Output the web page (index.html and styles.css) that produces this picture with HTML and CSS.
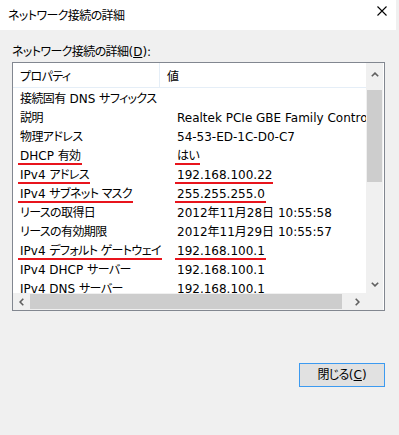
FILE: index.html
```html
<!DOCTYPE html>
<html lang="ja">
<head>
<meta charset="utf-8">
<title>ネットワーク接続の詳細</title>
<link rel="stylesheet" href="styles.css">
</head>
<body>
<div class="window">
  <div class="titlebar">
    <span class="title j">ネットワーク接続の詳細</span>
    <svg class="close" width="10" height="10" viewBox="0 0 10 10"><path d="M0.5 0.5 L9.5 9.5 M9.5 0.5 L0.5 9.5" stroke="#000" stroke-width="1.1" fill="none"/></svg>
  </div>
  <div class="content">
    <div class="label"><span class="j">ネットワーク接続の詳細</span>(<u>D</u>):</div>
    <div class="listbox">
      <div class="view">
        <div class="header">
          <div class="hcell first j">プロパティ</div>
          <div class="hcell second">値</div>
        </div>
        <div class="rows">
          <div class="row"><span class="prop"><span class="j">接続固有</span> DNS <span class="j">サフィックス</span></span><span class="val"></span></div>
          <div class="row"><span class="prop j">説明</span><span class="val">Realtek PCIe GBE Family Controller</span></div>
          <div class="row"><span class="prop j">物理アドレス</span><span class="val">54-53-ED-1C-D0-C7</span></div>
          <div class="row"><span class="prop"><span class="mark">DHCP <span class="j">有効</span></span></span><span class="val"><span class="mark j">はい</span></span></div>
          <div class="row"><span class="prop"><span class="mark">IPv4 <span class="j">アドレス</span></span></span><span class="val"><span class="mark">192.168.100.22</span></span></div>
          <div class="row"><span class="prop"><span class="mark">IPv4 <span class="j">サブネット マスク</span></span></span><span class="val"><span class="mark">255.255.255.0</span></span></div>
          <div class="row"><span class="prop j">リースの取得日</span><span class="val">2012年11月28日 10:55:58</span></div>
          <div class="row"><span class="prop j">リースの有効期限</span><span class="val">2012年11月29日 10:55:57</span></div>
          <div class="row"><span class="prop"><span class="mark">IPv4 <span class="j">デフォルト ゲートウェイ</span></span></span><span class="val"><span class="mark">192.168.100.1</span></span></div>
          <div class="row"><span class="prop">IPv4 DHCP <span class="j">サーバー</span></span><span class="val">192.168.100.1</span></div>
          <div class="row"><span class="prop">IPv4 DNS <span class="j">サーバー</span></span><span class="val">192.168.100.1</span></div>
        </div>
      </div>
      <div class="vscroll">
        <div class="arrow up"><svg width="8" height="5" viewBox="0 0 8 5"><path d="M0.8 4.3 L4 1.1 L7.2 4.3" stroke="#606060" stroke-width="1.6" fill="none"/></svg></div>
        <div class="vtrack"><div class="vthumb"></div></div>
        <div class="arrow"><svg width="8" height="5" viewBox="0 0 8 5"><path d="M0.8 0.7 L4 3.9 L7.2 0.7" stroke="#606060" stroke-width="1.6" fill="none"/></svg></div>
      </div>
      <div class="hscroll">
        <div class="arrow"><svg width="5" height="8" viewBox="0 0 5 8"><path d="M4.3 0.8 L1.1 4 L4.3 7.2" stroke="#606060" stroke-width="1.6" fill="none"/></svg></div>
        <div class="htrack"><div class="hthumb"></div></div>
        <div class="arrow"><svg width="5" height="8" viewBox="0 0 5 8"><path d="M0.7 0.8 L3.9 4 L0.7 7.2" stroke="#606060" stroke-width="1.6" fill="none"/></svg></div>
      </div>
      <div class="corner"></div>
    </div>
    <div class="buttons">
      <button class="btn"><span class="j">閉じる</span>(<u>C</u>)</button>
    </div>
  </div>
</div>
</body>
</html>
```
FILE: styles.css
```css
html, body {
  margin: 0;
  padding: 0;
}
body {
  background: #f0f0f0;
  width: 399px;
  height: 435px;
  overflow: hidden;
  font-family: "DejaVu Sans", "Noto Sans CJK JP", sans-serif;
  font-size: 12px;
  color: #000;
  font-feature-settings: "palt";
}
.j {
  letter-spacing: -0.6px;
}
.window {
  width: 396px;
}
.titlebar {
  height: 30px;
  background: #fff;
  display: flex;
  align-items: center;
  justify-content: space-between;
  padding: 0 9px 0 8px;
  box-sizing: border-box;
}
.title {
  line-height: 16px;
  margin-top: 1px;
}
.close {
  display: block;
  margin-top: -8px;
}
.content {
  padding: 14px 12px 0 12px;
}
.label {
  line-height: 16px;
  height: 16px;
}
.listbox {
  margin-top: 2px;
  width: 373px;
  height: 249px;
  box-sizing: border-box;
  border: 1px solid #828790;
  background: #fff;
  display: grid;
  grid-template-columns: 353px 17px;
  grid-template-rows: 230px 17px;
}
.view {
  overflow: hidden;
  white-space: nowrap;
  background: #fff;
}
.header {
  height: 24px;
  border-bottom: 1px solid #e5eef7;
  display: grid;
  grid-template-columns: 147px 1fr;
}
.hcell {
  height: 24px;
  box-sizing: border-box;
  padding-top: 4px;
  line-height: 20px;
}
.hcell.first {
  padding-left: 7px;
  border-right: 1px solid #e5eef7;
}
.hcell.second {
  padding-left: 7px;
}
.row {
  height: 19px;
  box-sizing: border-box;
  padding-top: 4px;
  line-height: 15px;
  display: grid;
  grid-template-columns: 164px 1fr;
}
.prop {
  padding-left: 7px;
}
.val {
  white-space: nowrap;
}
.mark {
  position: relative;
}
.mark::after {
  content: "";
  position: absolute;
  left: -2px;
  right: -1px;
  bottom: -2px;
  height: 2px;
  background: #e8141c;
}
.vscroll {
  background: #f0f0f0;
  display: flex;
  flex-direction: column;
}
.vscroll .arrow {
  height: 17px;
  display: flex;
  align-items: center;
  justify-content: center;
}
.vscroll .arrow.up {
  padding-top: 3px;
}
.vtrack {
  flex: 1;
  padding-top: 7px;
}
.vthumb {
  margin: 0 1px;
  height: 92px;
  background: #cdcdcd;
}
.hscroll {
  background: #f0f0f0;
  display: flex;
}
.hscroll .arrow {
  width: 17px;
  display: flex;
  align-items: center;
  justify-content: center;
}
.htrack {
  flex: 1;
  display: flex;
  align-items: center;
  padding-right: 7px;
}
.hthumb {
  height: 15px;
  flex: 1;
  background: #cdcdcd;
}
.corner {
  background: #f0f0f0;
}
.buttons {
  display: flex;
  justify-content: flex-end;
  margin-top: 52px;
}
.btn {
  width: 86px;
  height: 24px;
  margin-right: -1px;
  border: 1px solid #3c9af0;
  background: #e1e1e1;
  font-family: "DejaVu Sans", "Noto Sans CJK JP", sans-serif;
  font-size: 12px;
  font-feature-settings: "palt";
  color: #000;
  padding: 0;
  line-height: 20px;
}
```
